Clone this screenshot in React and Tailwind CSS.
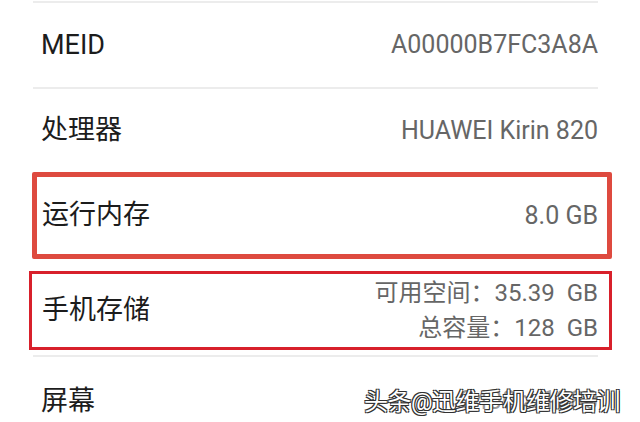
export default function App() {
  return (
    <div className="relative h-[422px] w-[640px] overflow-hidden bg-white font-['Roboto','Noto_Sans_CJK_SC',sans-serif]">
      {/* top divider */}
      <div className="ml-[33px] mt-[1px] h-[2px] w-[565px] bg-[#ececec]" />

      {/* MEID */}
      <div className="ml-[41px] mr-[42px] flex h-[84px] items-center justify-between">
        <span className="text-[27px] text-[#1c1c1c]">MEID</span>
        <span className="text-[25px] text-[#666]">A00000B7FC3A8A</span>
      </div>
      <div className="ml-[33px] h-[2px] w-[565px] bg-[#ececec]" />

      {/* processor */}
      <div className="ml-[41px] mr-[42px] flex h-[83px] items-center justify-between">
        <span className="text-[27px] text-[#1c1c1c]">处理器</span>
        <span className="text-[25px] text-[#666]">HUAWEI Kirin 820</span>
      </div>

      {/* RAM, boxed */}
      <div className="ml-[32px] flex h-[87px] w-[580px] items-center justify-between rounded-[2px] border-[5px] border-[#de4a3f] pl-[5px] pr-[9px]">
        <span className="text-[27px] text-[#1c1c1c]">运行内存</span>
        <span className="text-[25px] text-[#666]">8.0 GB</span>
      </div>

      {/* storage, boxed */}
      <div className="ml-[29px] mt-[12px] flex h-[79px] w-[583px] items-center justify-between border-[3px] border-[#d8202b] pl-[10px] pr-[11px]">
        <span className="text-[27px] text-[#1c1c1c]">手机存储</span>
        <div className="flex flex-col items-end text-[24px] leading-[35px] text-[#666]">
          <span>可用空间：35.39&nbsp;&nbsp;GB</span>
          <span>总容量：128&nbsp;&nbsp;GB</span>
        </div>
      </div>

      <div className="ml-[33px] mt-[5px] h-[2px] w-[565px] bg-[#ececec]" />

      {/* screen */}
      <div className="ml-[41px] mr-[42px] flex h-[88px] items-center justify-between">
        <span className="text-[27px] text-[#1c1c1c]">屏幕</span>
        <span className="text-[25px] text-[#999]">2400 × 1080</span>
      </div>

      {/* watermark */}
      <div className="absolute left-[364px] top-[384px] text-[24px] tracking-[-0.5px] text-white [text-shadow:0_0_1px_#222,1px_1px_0_#333,-1px_-1px_0_#333,1px_-1px_0_#333,-1px_1px_0_#333]">
        头条@迅维手机维修培训
      </div>
    </div>
  );
}
